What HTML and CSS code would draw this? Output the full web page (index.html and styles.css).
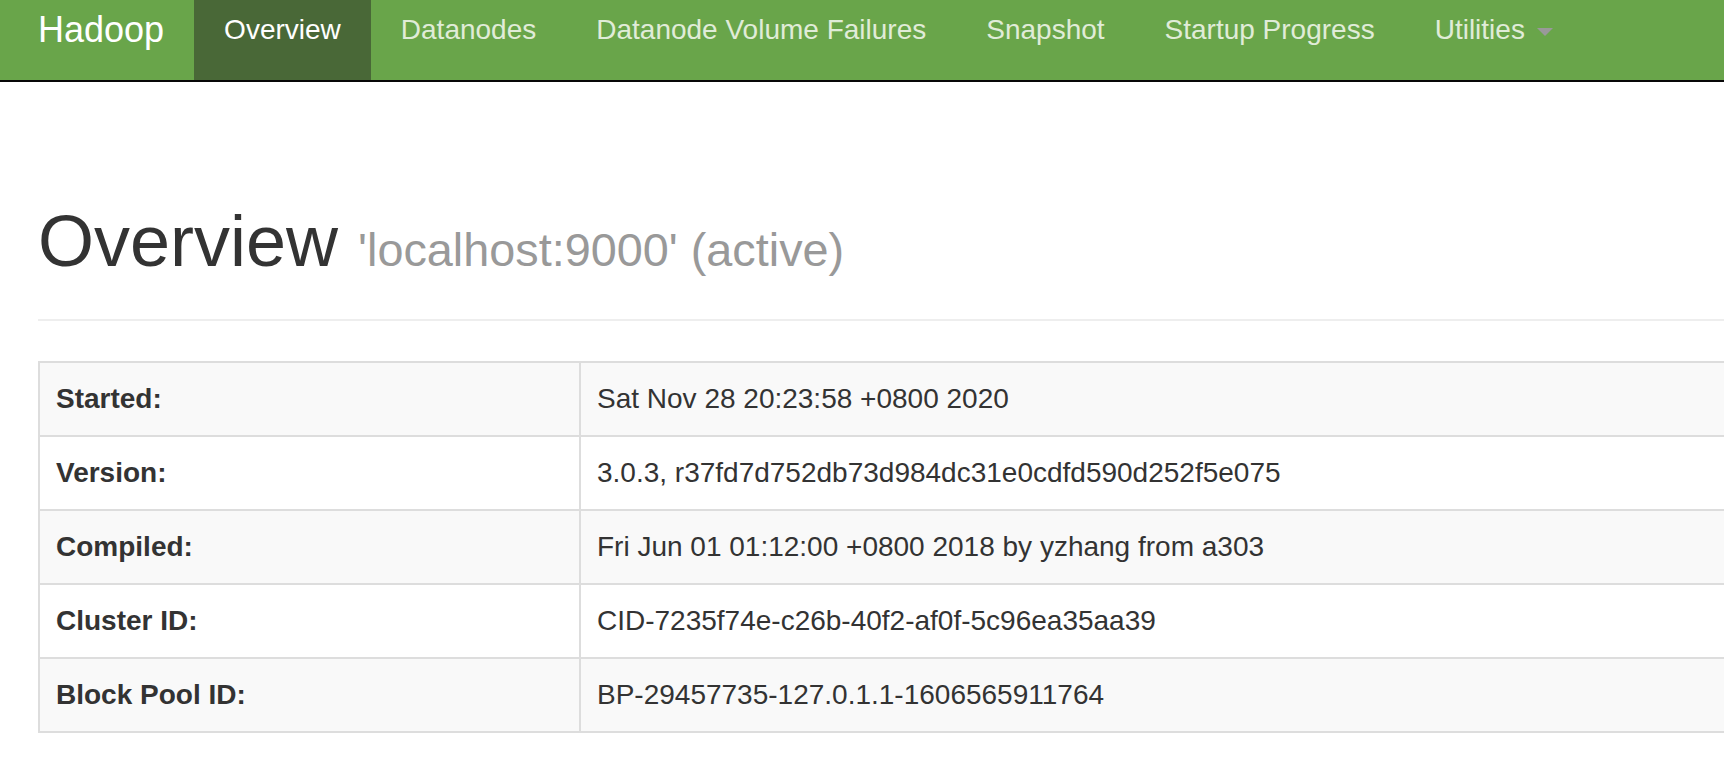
FILE: index.html
```html
<!DOCTYPE html>
<html lang="en">
<head>
    <meta charset="UTF-8">
    <title>Namenode information</title>
    <link rel="stylesheet" href="styles.css">
</head>
<body>

<nav class="navbar">
    <a class="navbar-brand" href="#">Hadoop</a>
    <ul class="nav">
        <li class="active"><a href="#">Overview</a></li>
        <li><a href="#">Datanodes</a></li>
        <li><a href="#">Datanode Volume Failures</a></li>
        <li><a href="#">Snapshot</a></li>
        <li><a href="#">Startup Progress</a></li>
        <li><a href="#">Utilities <span class="caret"></span></a></li>
    </ul>
</nav>

<div class="container">
    <div class="page-header">
        <h1>Overview <small>'localhost:9000' (active)</small></h1>
    </div>

    <table class="table-info">
        <tr><th>Started:</th><td>Sat Nov 28 20:23:58 +0800 2020</td></tr>
        <tr><th>Version:</th><td>3.0.3, r37fd7d752db73d984dc31e0cdfd590d252f5e075</td></tr>
        <tr><th>Compiled:</th><td>Fri Jun 01 01:12:00 +0800 2018 by yzhang from a303</td></tr>
        <tr><th>Cluster ID:</th><td>CID-7235f74e-c26b-40f2-af0f-5c96ea35aa39</td></tr>
        <tr><th>Block Pool ID:</th><td>BP-29457735-127.0.1.1-1606565911764</td></tr>
    </table>
</div>

</body>
</html>
```

FILE: styles.css
```css
/* General Styles */
body {
    margin: 0;
    font-family: "Liberation Sans", Arial, sans-serif;
    font-size: 28px;
    line-height: 40px;
    color: #333;
    background-color: #fff;
    overflow: hidden;
}
a {
    text-decoration: none;
}

/* Navbar */
.navbar {
    display: flex;
    height: 80px;
    padding-left: 8px;
    background-color: #69a54a;
    border-bottom: 2px solid #080808;
}
.navbar-brand {
    padding: 10px 30px 0;
    font-size: 36px;
    line-height: 40px;
    color: #fff;
}
.nav {
    display: flex;
    margin: 0;
    padding: 0;
    list-style: none;
}
.nav li a {
    display: block;
    height: 80px;
    box-sizing: border-box;
    padding: 10px 30px 0;
    color: #e0ecd8;
    white-space: nowrap;
}
.nav li.active a {
    background-color: #496837;
    color: #fff;
}
.caret {
    display: inline-block;
    width: 0;
    height: 0;
    margin-left: 4px;
    vertical-align: middle;
    border-top: 8px solid #999;
    border-left: 8px solid transparent;
    border-right: 8px solid transparent;
}

/* Page */
.container {
    width: 2400px;
    padding: 0 38px;
}
.page-header {
    margin: 120px 0 40px;
    padding-bottom: 18px;
    border-bottom: 2px solid #eee;
}
.page-header h1 {
    margin: 0 0 20px;
    font-size: 72px;
    line-height: 1.1;
    font-weight: normal;
}
.page-header h1 small {
    font-size: 65%;
    line-height: 1;
    color: #999;
}

/* Info table */
.table-info {
    width: 100%;
    border-collapse: collapse;
}
.table-info th,
.table-info td {
    padding: 16px;
    border: 2px solid #ddd;
    text-align: left;
    vertical-align: top;
}
.table-info th {
    width: 507px;
    font-weight: bold;
}
.table-info tr:nth-child(odd) {
    background-color: #f9f9f9;
}
```
